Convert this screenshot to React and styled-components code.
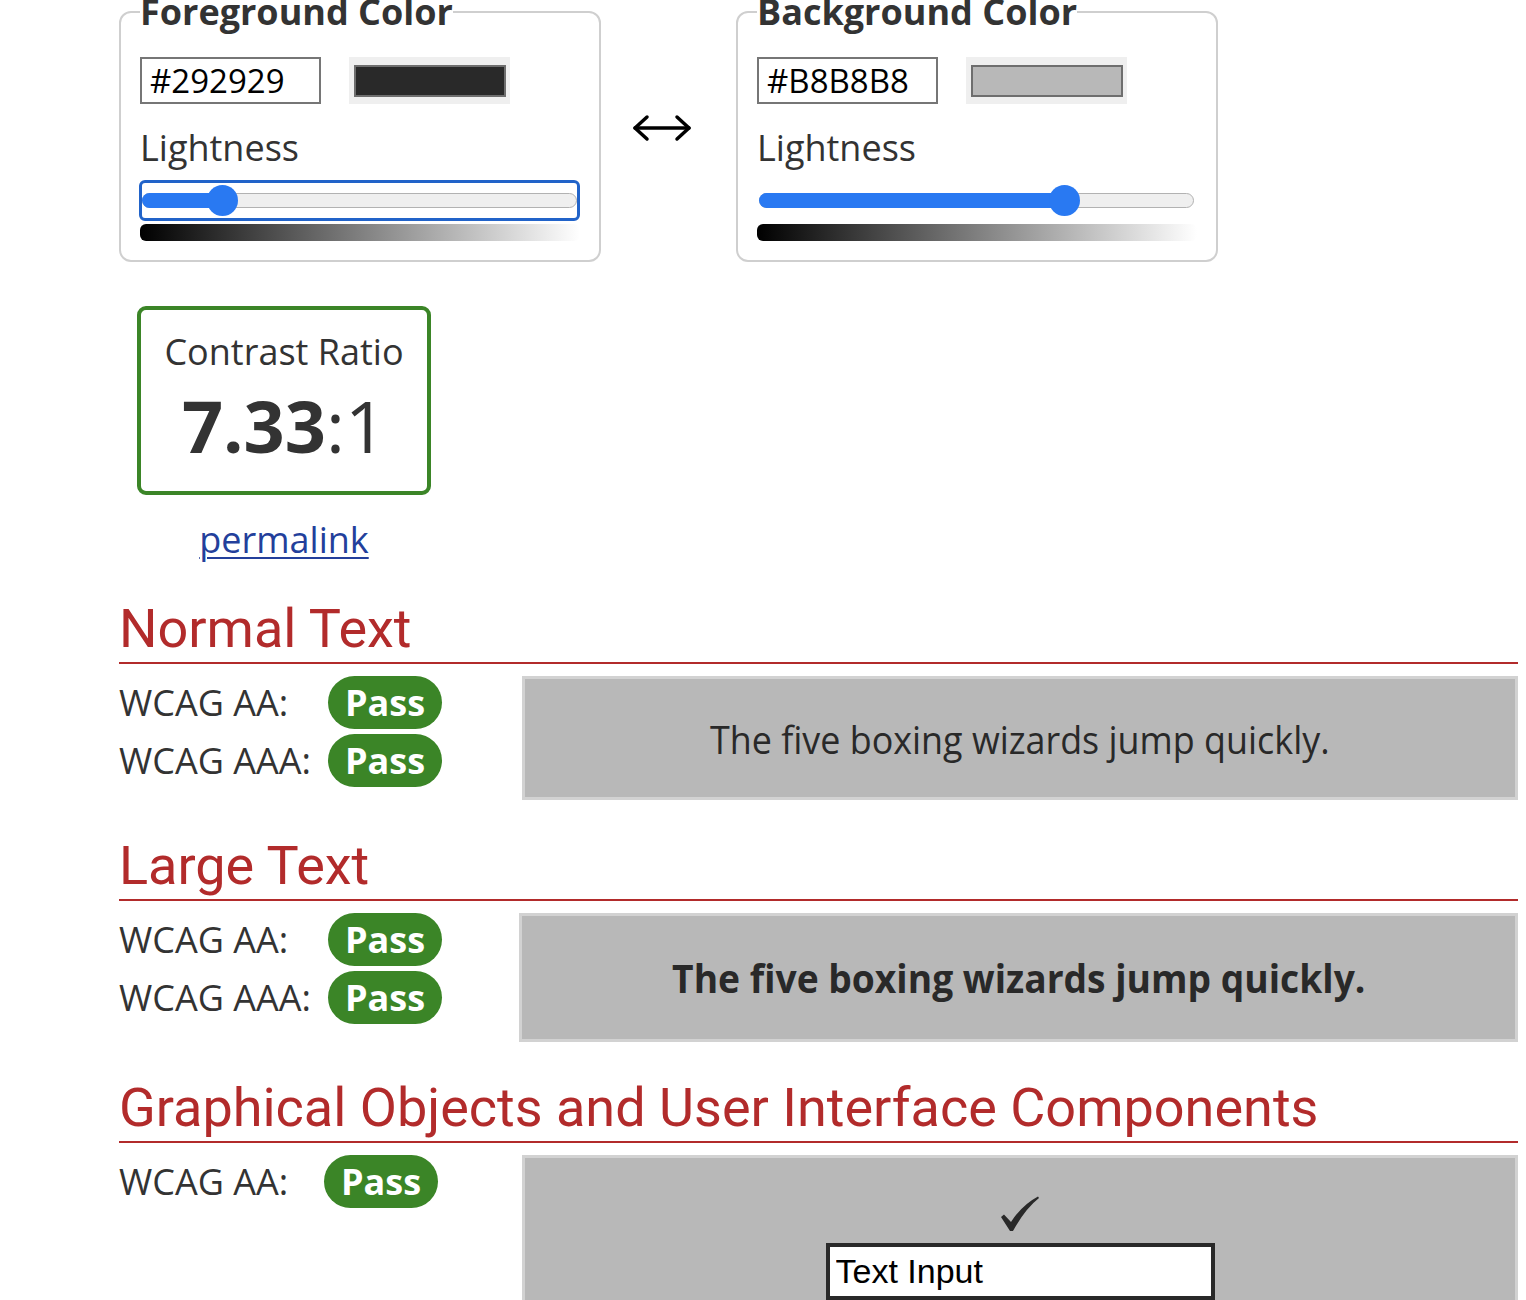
import React from 'react';
import styled, { createGlobalStyle } from 'styled-components';

const GlobalStyle = createGlobalStyle`
  body {
    margin: 0;
    background: #fff;
    color: #333;
    font-family: "Open Sans", "Liberation Sans", sans-serif;
  }
`;

const colors = [
  { title: 'Foreground Color', hex: '#292929', lightness: 0.16, focused: true },
  { title: 'Background Color', hex: '#B8B8B8', lightness: 0.72, focused: false },
];

const sections = [
  {
    title: 'Normal Text',
    labelWidth: 209,
    colWidth: 403,
    results: ['WCAG AA:', 'WCAG AAA:'],
    preview: 'normal',
  },
  {
    title: 'Large Text',
    labelWidth: 209,
    colWidth: 400,
    results: ['WCAG AA:', 'WCAG AAA:'],
    preview: 'large',
  },
  {
    title: 'Graphical Objects and User Interface Components',
    labelWidth: 205,
    colWidth: 403,
    results: ['WCAG AA:'],
    preview: 'ui',
  },
];

export default function App() {
  return (
    <>
      <GlobalStyle />
      <Page>
        <ColorRow>
          <ColorPicker {...colors[0]} />
          <SwapArrow>
            <svg width="60" height="28" viewBox="0 0 60 28" fill="none" stroke="#000" strokeWidth="3.5" strokeLinecap="round" strokeLinejoin="round">
              <path d="M3 14 H57" />
              <path d="M15 3 L3 14 L15 25" />
              <path d="M45 3 L57 14 L45 25" />
            </svg>
          </SwapArrow>
          <ColorPicker {...colors[1]} />
        </ColorRow>

        <RatioBlock>
          <RatioBox>
            <RatioTitle>Contrast Ratio</RatioTitle>
            <RatioValue>
              <strong>7.33</strong>:1
            </RatioValue>
          </RatioBox>
          <Permalink href="#">permalink</Permalink>
        </RatioBlock>

        {sections.map((s) => (
          <Section key={s.title}>
            <SectionTitle>{s.title}</SectionTitle>
            <ResultRow>
              <ResultsCol $width={s.colWidth} $labelWidth={s.labelWidth}>
                {s.results.map((r) => (
                  <React.Fragment key={r}>
                    <ResultLabel>{r}</ResultLabel>
                    <div>
                      <PassPill>Pass</PassPill>
                    </div>
                  </React.Fragment>
                ))}
              </ResultsCol>
              <Preview kind={s.preview} />
            </ResultRow>
          </Section>
        ))}
      </Page>
    </>
  );
}

const ColorPicker = ({ title, hex, lightness, focused }) => {
  const pos = `calc(${lightness} * (100% - 31px))`;
  return (
    <Fieldset>
      <Legend>{title}</Legend>
      <HexRow>
        <HexInput readOnly value={hex} />
        <Swatch>
          <SwatchFill $color={hex} />
        </Swatch>
      </HexRow>
      <FieldLabel>Lightness</FieldLabel>
      <SliderFrame $focused={focused}>
        <Track>
          <TrackFill style={{ width: `calc(${pos} + 16px)` }} />
          <Thumb style={{ left: pos }} />
        </Track>
      </SliderFrame>
      <LightnessScale />
    </Fieldset>
  );
};

const Preview = ({ kind }) => {
  if (kind === 'ui') {
    return (
      <PreviewBox $height={150} $column>
        <svg width="40" height="36" viewBox="0 0 40 36">
          <path
            d="M1 21 L4 18.5 L11 26 Q22 9 38 0.5 L39 2 Q25 13 13 35 L10 35 Z"
            fill="#292929"
          />
        </svg>
        <UiInput readOnly value="Text Input" />
      </PreviewBox>
    );
  }
  return (
    <PreviewBox $height={kind === 'large' ? 129 : 124}>
      <PreviewText $large={kind === 'large'}>The five boxing wizards jump quickly.</PreviewText>
    </PreviewBox>
  );
};

const Page = styled.main`
  margin-top: -13px;
  padding: 0 8px 0 119px;
  height: 1313px;
  overflow: hidden;
`;

const ColorRow = styled.div`
  display: flex;
  align-items: center;
`;

const Fieldset = styled.fieldset`
  width: 482px;
  min-width: 0;
  box-sizing: border-box;
  margin: 0;
  padding: 21px 19px 19px;
  border: 2px solid #cfcfcf;
  border-radius: 12px;
`;

const Legend = styled.legend`
  padding: 0;
  font-size: 36px;
  font-weight: 700;
  line-height: 49px;
  color: #333;
`;

const SwapArrow = styled.div`
  width: 135px;
  display: flex;
  justify-content: center;
  padding: 6px 14px 0 0;
  box-sizing: border-box;
`;

const HexRow = styled.div`
  display: flex;
  gap: 28px;
`;

const HexInput = styled.input`
  width: 181px;
  height: 47px;
  box-sizing: border-box;
  margin: 0;
  padding: 0 8px;
  border: 2px solid #767676;
  font-family: "Open Sans", sans-serif;
  font-size: 33px;
  color: #000;
  background: #fff;
  outline: none;
`;

const Swatch = styled.div`
  width: 161px;
  height: 47px;
  box-sizing: border-box;
  padding: 8px 4px 7px 5px;
  background: #efefef;
`;

const SwatchFill = styled.div`
  height: 100%;
  box-sizing: border-box;
  border: 2px solid #6e6e6e;
  background: ${(p) => p.$color};
`;

const FieldLabel = styled.div`
  margin-top: 19px;
  font-size: 36px;
  line-height: 49px;
  color: #333;
`;

const SliderFrame = styled.div`
  margin: 8px 0 0 -1px;
  height: 41px;
  box-sizing: border-box;
  border: 3px solid ${(p) => (p.$focused ? '#2163c9' : 'transparent')};
  border-radius: 6px;
  display: flex;
  align-items: center;
`;

const Track = styled.div`
  position: relative;
  flex: 1;
  height: 15px;
  box-sizing: border-box;
  background: #efefef;
  border: 1px solid #b2b2b2;
  border-radius: 8px;
`;

const TrackFill = styled.div`
  position: absolute;
  left: -1px;
  top: -1px;
  height: 15px;
  background: #2979f2;
  border-radius: 8px 0 0 8px;
`;

const Thumb = styled.div`
  position: absolute;
  top: 50%;
  width: 31px;
  height: 31px;
  margin-top: -15.5px;
  border-radius: 50%;
  background: #2979f2;
`;

const LightnessScale = styled.div`
  margin-top: 3px;
  height: 17px;
  border-radius: 6px;
  background: linear-gradient(to right, #000, #fff);
`;

const RatioBlock = styled.div`
  width: 294px;
  margin: 44px 0 0 18px;
`;

const RatioBox = styled.div`
  box-sizing: border-box;
  border: 4px solid #3b8527;
  border-radius: 9px;
  padding: 17px 0 17px;
  text-align: center;
  color: #333;
`;

const RatioTitle = styled.div`
  font-size: 36px;
  line-height: 49px;
`;

const RatioValue = styled.div`
  font-size: 72px;
  line-height: 98px;

  strong {
    font-weight: 700;
  }
`;

const Permalink = styled.a`
  display: block;
  margin-top: 20px;
  text-align: center;
  font-size: 36px;
  line-height: 49px;
  color: #233f9b;
  text-decoration: underline;
  text-underline-offset: 4px;
  text-decoration-thickness: 2px;
`;

const Section = styled.section`
  margin-top: 34px;

  &:first-of-type {
    margin-top: 33px;
  }
`;

const SectionTitle = styled.h2`
  margin: 0 0 12px;
  padding-bottom: 1px;
  font-family: Roboto, "Liberation Sans", sans-serif;
  font-size: 54px;
  font-weight: 400;
  line-height: 64px;
  color: #b22b2b;
  border-bottom: 2px solid #b22b2b;
`;

const ResultRow = styled.div`
  display: flex;
  align-items: flex-start;
`;

const ResultsCol = styled.div`
  width: ${(p) => p.$width}px;
  flex: none;
  display: grid;
  grid-template-columns: ${(p) => p.$labelWidth}px auto;
  row-gap: 5px;
  align-items: center;
`;

const ResultLabel = styled.div`
  font-size: 36px;
  line-height: 49px;
  color: #333;
  white-space: nowrap;
`;

const PassPill = styled.span`
  display: inline-block;
  padding: 2px 17px;
  border-radius: 27px;
  background: #3b8527;
  color: #fff;
  font-size: 36px;
  font-weight: 700;
  line-height: 49px;
`;

const PreviewBox = styled.div`
  flex: 1;
  height: ${(p) => p.$height}px;
  box-sizing: border-box;
  background: #b8b8b8;
  border: 3px solid #d2d2d2;
  display: flex;
  flex-direction: ${(p) => (p.$column ? 'column' : 'row')};
  align-items: center;
  justify-content: ${(p) => (p.$column ? 'flex-start' : 'center')};
  padding-top: ${(p) => (p.$column ? '38px' : '0')};
`;

const PreviewText = styled.span`
  display: inline-block;
  font-size: ${(p) => (p.$large ? '40px' : '39px')};
  font-weight: ${(p) => (p.$large ? 700 : 400)};
  color: #292929;
  white-space: nowrap;
  transform: scaleX(${(p) => (p.$large ? 0.93 : 0.92)});
`;

const UiInput = styled.input`
  margin-top: 11px;
  width: 389px;
  height: 57px;
  box-sizing: border-box;
  padding: 0 6px;
  border: 4px solid #292929;
  background: #fff;
  color: #000;
  font-family: "Liberation Sans", Arial, sans-serif;
  font-size: 34px;
  outline: none;
`;
